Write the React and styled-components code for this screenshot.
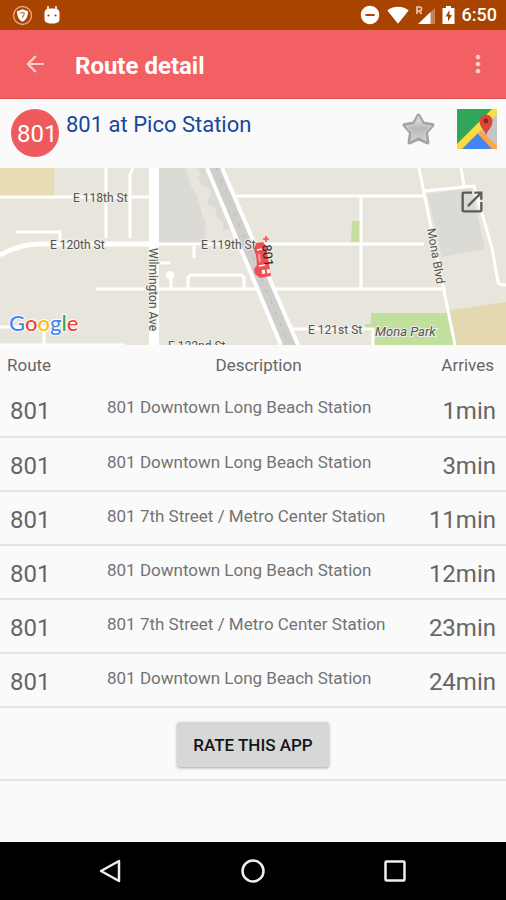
import React from "react";
import styled, { createGlobalStyle } from "styled-components";
import {
  MdArrowBack,
  MdDoNotDisturbOn,
  MdMoreVert,
  MdOpenInNew,
  MdSignalWifi4Bar,
} from "react-icons/md";

const GlobalStyle = createGlobalStyle`
  * {
    box-sizing: border-box;
  }

  body {
    margin: 0;
    background-color: #fafafa;
    font-family: Roboto, "Noto Sans", sans-serif;
  }

  button {
    font-family: inherit;
  }
`;

const Screen = styled.div`
  display: flex;
  flex-direction: column;
  min-height: 100vh;
`;

const StatusBar = styled.div`
  display: flex;
  align-items: center;
  justify-content: space-between;
  height: 30px;
  padding: 0 9px 0 12px;
  background-color: #a84300;
  color: #fff;
`;

const StatusGroup = styled.div`
  display: flex;
  align-items: center;
  gap: ${({ $gap }) => $gap}px;

  svg {
    display: block;
  }
`;

const Clock = styled.span`
  font-size: 18px;
  font-weight: 500;
  line-height: 32px;
`;

const AppBar = styled.header`
  display: flex;
  align-items: center;
  height: 69px;
  padding: 0 14px 0 22px;
  background-color: #f26063;
  border-bottom: 1px solid #dc4f52;
  color: #fff;
`;

const IconButton = styled.button`
  display: flex;
  padding: 0;
  border: 0;
  background: none;
  color: ${({ $color }) => $color || "inherit"};
  cursor: pointer;
`;

const Title = styled.h1`
  flex: 1;
  margin: 0 0 0 27px;
  padding-top: 3px;
  font-size: 24px;
  font-weight: 700;
  line-height: 32px;
`;

const StationBar = styled.section`
  display: flex;
  align-items: flex-start;
  height: 69px;
  padding: 10px 9px 0 11px;
`;

const RouteBadge = styled.span`
  flex: none;
  width: 48px;
  height: 48px;
  padding-left: 6px;
  border-radius: 50%;
  background-color: #ee5a5d;
  color: #fff;
  font-size: 24px;
  line-height: 50px;
`;

const StationName = styled.h2`
  flex: 1;
  margin: 0 0 0 7px;
  color: #17479e;
  font-size: 22px;
  font-weight: 400;
  line-height: 32px;
`;

const StationActions = styled.div`
  display: flex;
  align-items: center;
  gap: 21px;
`;

const MapPanel = styled.section`
  position: relative;
  height: 177px;
  background-color: #e8e6dc;
`;

const MapCanvas = styled.svg`
  display: block;
  width: 100%;
  height: 100%;
`;

const MapLabel = styled.text`
  fill: #54534f;
  font-family: Roboto, sans-serif;
  font-size: ${({ $size }) => $size || 12}px;
  font-style: ${({ $italic }) => ($italic ? "italic" : "normal")};
  paint-order: stroke;
  stroke: #f1efe8;
  stroke-width: 2px;
`;

const MapLogo = styled.text`
  font-family: Lato, sans-serif;
  font-size: 22px;
  font-weight: 500;
  paint-order: stroke;
  stroke: #fff;
  stroke-width: 2px;
`;

const MarkerLabel = styled.text`
  fill: #2b2224;
  font-size: 13px;
`;

const OpenMap = styled(IconButton)`
  position: absolute;
  top: 20px;
  right: 20px;
`;

const Table = styled.table`
  width: 100%;
  border-collapse: collapse;
  table-layout: fixed;
  color: #666;
`;

const HeadCell = styled.th`
  width: ${({ $width }) => $width || "auto"};
  height: 38px;
  padding: ${({ $padding }) => $padding || "2px 0 0"};
  font-size: 17px;
  font-weight: 400;
  text-align: ${({ $align }) => $align || "left"};
`;

const Row = styled.tr`
  height: 54px;
  border-bottom: 2px solid #e4e4e4;
`;

const NumberCell = styled.td`
  padding: ${({ $right }) => ($right ? "3px 10px 0 0" : "3px 0 0 10px")};
  font-size: 24px;
  line-height: 28px;
  text-align: ${({ $right }) => ($right ? "right" : "left")};
  white-space: nowrap;
`;

const DescriptionCell = styled.td`
  padding: 13px 0 0;
  color: #737373;
  font-size: 17px;
  line-height: 22px;
  vertical-align: top;
`;

const RateRow = styled.div`
  display: flex;
  justify-content: center;
  padding: 14px 0 12px;
  border-bottom: 2px solid #e4e4e4;
`;

const RateButton = styled.button`
  height: 45px;
  padding: 0 16px;
  border: 0;
  border-radius: 3px;
  background-color: #d6d7d7;
  box-shadow: 0 1px 3px rgba(0, 0, 0, 0.35);
  color: #151515;
  font-size: 17px;
  font-weight: 500;
  cursor: pointer;
`;

const NavBar = styled.nav`
  display: flex;
  align-items: center;
  justify-content: center;
  gap: 116px;
  height: 58px;
  margin-top: auto;
  background-color: #000;
  color: #eee;
`;

const arrivals = [
  { route: "801", description: "801 Downtown Long Beach Station", time: "1min" },
  { route: "801", description: "801 Downtown Long Beach Station", time: "3min" },
  { route: "801", description: "801 7th Street / Metro Center Station", time: "11min" },
  { route: "801", description: "801 Downtown Long Beach Station", time: "12min" },
  { route: "801", description: "801 7th Street / Metro Center Station", time: "23min" },
  { route: "801", description: "801 Downtown Long Beach Station", time: "24min" },
];

const ShieldIcon = () => (
  <svg width="21" height="21" viewBox="0 0 21 21">
    <circle cx="10.5" cy="10.5" r="9" fill="none" stroke="#e0a98c" strokeWidth="1.4" />
    <path d="M5 6.2 10.5 4.3 16 6.2c0 5-1.4 8.2-5.5 10.6C6.4 14.4 5 11.2 5 6.2Z" fill="#fff" />
    <path d="M8.7 8.5c.5-1.6 3.8-1.4 3.5.5-.2 1.3-1.5 1.3-1.7 4" fill="none" stroke="#c98a60" strokeWidth="1.5" />
  </svg>
);

const DebugIcon = () => (
  <svg width="18" height="20" viewBox="0 0 18 20">
    <path d="M5 1v4M13 1v4" stroke="#fff" strokeWidth="1.5" />
    <path d="M1.5 7C2 4.5 4 3.5 9 3.5s7 1 7.5 3.500v7c0 3-2 4.500-7.500 4.500S1.500 17 1.500 14Z" fill="#fff" />
    <circle cx="5.5" cy="10.5" r="1.1" fill="#a84300" />
    <circle cx="12.5" cy="10.5" r="1.1" fill="#a84300" />
  </svg>
);

const SignalIcon = () => (
  <svg width="21" height="20" viewBox="0 0 21 20">
    <path d="M20 3v16H4Z" fill="#c98358" />
    <path d="M15.5 7v12H3Z" fill="#fff" />
    <path d="M2 9V2h2.500q2 0 2 2t-2 2H2M4.500 6l2 3" fill="none" stroke="#e9cfc0" strokeWidth="1.6" />
  </svg>
);

const BatteryIcon = () => (
  <svg width="14" height="20" viewBox="0 0 14 20">
    <path d="M4 1h5v2h3.500v16H.5V3H4Z" fill="#fff" />
    <path d="M7.500 5 3.500 11.500h2.500V16.500l4-6.500H7.500Z" fill="#a84300" />
  </svg>
);

const StarIcon = () => (
  <svg width="35" height="34" viewBox="0 0 35 34">
    <defs>
      <linearGradient id="starFill" x1="0" y1="0" x2="0" y2="1">
        <stop offset="0" stopColor="#e6e6e6" />
        <stop offset="0.5" stopColor="#b8b8b8" />
        <stop offset="1" stopColor="#d2d2d2" />
      </linearGradient>
    </defs>
    <path
      d="M17.500 3.500 22 11.500 31.500 13 25 20.500 26.500 30.500 17.500 26.500 8.500 30.500 10 20.500 3.500 13 13 11.500Z"
      fill="#a9a9a9"
      stroke="#a3a3a3"
      strokeWidth="4"
      strokeLinejoin="round"
    />
    <path
      d="M17.500 4.500 21.500 12.500 30 14 24 20 25 28.500 17.500 24.500 10 28.500 11 20 5 14 13.500 12.500Z"
      fill="url(#starFill)"
      stroke="#cfcfcf"
      strokeWidth="1.2"
      strokeLinejoin="round"
    />
  </svg>
);

const MapsIcon = () => (
  <svg width="40" height="40" viewBox="0 0 40 40">
    <path d="M0 0h40v40H0Z" fill="#2fa65a" />
    <path d="M40 2v38L20 20Z" fill="#c6c5c5" />
    <path d="M3 40 21 22 36 40Z" fill="#4285f4" />
    <path d="m22 20 18 17v3h-5L20 24Z" fill="#fba64b" />
    <path d="M35 0h5v5L5 40H0v-5Z" fill="#fddc3f" />
    <path d="M29 27c-.7-6-6.500-8-6.500-15a6.500 6.500 0 0 1 13 0c0 7-5.800 9-6.500 15Z" fill="#dc4638" />
    <circle cx="29" cy="12" r="2.4" fill="#7c2a23" />
  </svg>
);

const BackIcon = () => (
  <svg width="26" height="26" viewBox="0 0 26 26" fill="none" stroke="currentColor" strokeWidth="2.5">
    <path d="M21 3v20L3 13Z" strokeLinejoin="round" />
  </svg>
);

const HomeIcon = () => (
  <svg width="26" height="26" viewBox="0 0 26 26" fill="none" stroke="currentColor" strokeWidth="2.5">
    <circle cx="13" cy="13" r="10.5" />
  </svg>
);

const RecentsIcon = () => (
  <svg width="26" height="26" viewBox="0 0 26 26" fill="none" stroke="currentColor" strokeWidth="2.5">
    <rect x="3.5" y="3.5" width="19" height="19" rx="1" />
  </svg>
);

const StreetMap = () => (
  <MapCanvas viewBox="0 0 506 177" preserveAspectRatio="xMidYMid slice">
    <path d="M0 0h54v28H0Z" fill="#e8dcb5" />
    <path d="M506 134v43h-52l-9-34Z" fill="#e4d8b0" />
    <path d="M159 0h27l4 16 7 12 5 18 3 6v23h-46Z" fill="#dcdad5" />
    <path d="M196 0h12l27 60-12 2v-8l-6-4-2-10-8-4 4-14-8-4-5-8 3-4Z" fill="#dcdad5" />
    <path d="m427 26 44-6 14 61-43 8Z" fill="#dcdad5" />
    <path d="M352 53h8v21h-9Z" fill="#c6dfa0" />
    <path d="M371 145h76l9 32h-82v-14h-9v-7h6Z" fill="#c1df9d" />
    <g fill="none" stroke="#fff" strokeWidth="3">
      <path d="M0 29h154M230 28h194M106 0v70M130 70V6l3-6M16 64h44v12" />
      <path d="M154 76h270M96 121h350M361 29v92M292 161h81v16" />
      <path d="m419 0 36 177M424 23l50-5 18 62 6 34q1 3 8 3M461 0l3 18" />
      <path d="M194 78v12M160 95h10M171 107v14M188 121v-10q0-4 5-4h46q5 0 5 4v10" />
      <path d="M0 159h44v18M0 177h125" />
    </g>
    <circle cx="170" cy="107" r="4" fill="#fff" />
    <path d="M0 87q22-12 43-11h111" fill="none" stroke="#fff" strokeWidth="5" />
    <path d="M154 0v177" stroke="#fff" strokeWidth="10" />
    <path d="m207 0 15 0 76 177h-17Z" fill="#cfcecb" />
    <path d="m207 0 74 177M222 0l76 177" fill="none" stroke="#fff" strokeWidth="4" />
    <path d="m216 0 73 177" stroke="#b5b5b2" strokeDasharray="3 9" />
    <MapLabel x="73" y="34">E 118th St</MapLabel>
    <MapLabel x="50" y="81">E 120th St</MapLabel>
    <MapLabel x="201" y="81">E 119th St</MapLabel>
    <MapLabel x="308" y="166">E 121st St</MapLabel>
    <MapLabel x="168" y="182">E 122nd St</MapLabel>
    <MapLabel transform="translate(149 80) rotate(90)">Wilmington Ave</MapLabel>
    <MapLabel transform="translate(427 61) rotate(80)">Mona Blvd</MapLabel>
    <MapLabel x="375" y="168" $size={13} $italic>Mona Park</MapLabel>
    {/* train position */}
    <g transform="translate(254 72)">
      <path d="M9-1h6M12-4v6" stroke="#ef5054" strokeWidth="1.6" />
      <path d="M2 3 9 2l3 4 5 30-11 2-5-4-1-5 3-4-1-10-2-5Z" fill="#ef5054" />
      <path d="m3 10 5-1M5 26l6-1" stroke="#fff" strokeWidth="1.4" />
      <path d="m5 14 1 8" stroke="#f6a3a5" strokeWidth="2" />
      <path d="m8 32 8-1" stroke="#fff" strokeWidth="4" strokeDasharray="3 2" />
      <MarkerLabel transform="translate(8 5) rotate(84)">801</MarkerLabel>
    </g>
    <MapLogo x="9" y="163">
      <tspan fill="#4285f4">G</tspan>
      <tspan fill="#ea4335">o</tspan>
      <tspan fill="#fbbc05">o</tspan>
      <tspan fill="#4285f4">g</tspan>
      <tspan fill="#34a853">l</tspan>
      <tspan fill="#ea4335">e</tspan>
    </MapLogo>
  </MapCanvas>
);

function Arrivals() {
  return (
    <Table>
      <thead>
        <tr>
          <HeadCell $width="107px" $padding="2px 0 0 7px">Route</HeadCell>
          <HeadCell $align="center">Description</HeadCell>
          <HeadCell $width="96px" $align="right" $padding="2px 12px 0 0">Arrives</HeadCell>
        </tr>
      </thead>
      <tbody>
        {arrivals.map(({ route, description, time }) => (
          <Row key={time}>
            <NumberCell>{route}</NumberCell>
            <DescriptionCell>{description}</DescriptionCell>
            <NumberCell $right>{time}</NumberCell>
          </Row>
        ))}
      </tbody>
    </Table>
  );
}

function App() {
  return (
    <>
      <GlobalStyle />
      <Screen>
        <StatusBar>
          <StatusGroup $gap={10}>
            <ShieldIcon />
            <DebugIcon />
          </StatusGroup>
          <StatusGroup $gap={6}>
            <MdDoNotDisturbOn size={22} />
            <MdSignalWifi4Bar size={22} />
            <SignalIcon />
            <BatteryIcon />
            <Clock>6:50</Clock>
          </StatusGroup>
        </StatusBar>
        <AppBar>
          <IconButton aria-label="Back" $color="#fccdce">
            <MdArrowBack size={26} />
          </IconButton>
          <Title>Route detail</Title>
          <IconButton aria-label="More options" $color="#fccdce">
            <MdMoreVert size={28} />
          </IconButton>
        </AppBar>
        <StationBar>
          <RouteBadge>801</RouteBadge>
          <StationName>801 at Pico Station</StationName>
          <StationActions>
            <IconButton aria-label="Favorite">
              <StarIcon />
            </IconButton>
            <IconButton aria-label="Directions">
              <MapsIcon />
            </IconButton>
          </StationActions>
        </StationBar>
        <MapPanel>
          <StreetMap />
          <OpenMap aria-label="Open map" $color="#5c5b57">
            <MdOpenInNew size={28} />
          </OpenMap>
        </MapPanel>
        <Arrivals />
        <RateRow>
          <RateButton>RATE THIS APP</RateButton>
        </RateRow>
        <NavBar>
          <IconButton aria-label="Back">
            <BackIcon />
          </IconButton>
          <IconButton aria-label="Home">
            <HomeIcon />
          </IconButton>
          <IconButton aria-label="Recent apps">
            <RecentsIcon />
          </IconButton>
        </NavBar>
      </Screen>
    </>
  );
}

export default App;
